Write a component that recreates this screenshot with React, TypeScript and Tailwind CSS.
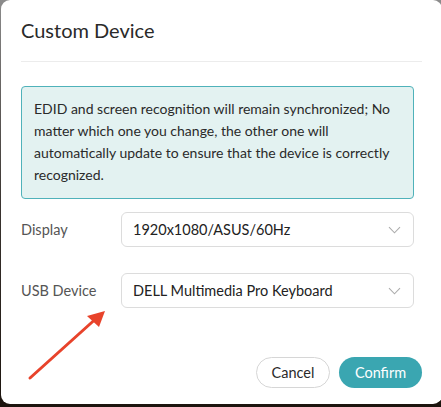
import React from "react";

function Chevron() {
  return (
    <svg width="13" height="8" viewBox="0 0 13 8" fill="none">
      <path d="M1 1.2L6.5 6.8L12 1.2" stroke="#acacac" strokeWidth="1.1" />
    </svg>
  );
}

function Select({ value }: { value: string }) {
  return (
    <div className="flex h-[35px] flex-1 items-center justify-between rounded-[6px] border border-[#dcdcdc] bg-white pl-[11px] pr-[12px]">
      <span className="text-[14.5px] text-[#222]">{value}</span>
      <Chevron />
    </div>
  );
}

export default function App() {
  return (
    <div
      className="relative h-[407px] w-[441px] overflow-hidden bg-gradient-to-b from-[#8c8c8c] via-[#3a3430] to-[#1c140e]"
      style={{ fontFamily: 'Lato, "Noto Sans", sans-serif' }}
    >
      <div className="ml-[1px] flex h-[404px] w-[441px] flex-col rounded-[9px] bg-white px-5">
        <div className="pt-[16px] pb-[17px] text-[20px] leading-[28px] text-[#2a2a2a]">Custom Device</div>
        <div className="h-px bg-[#ececec]" />
        <div className="flex flex-col pr-2">
          <div className="mt-[24px] rounded-[4px] border border-[#4fb2ba] bg-[#e3f2f1] pl-[12px] pr-[10px] pt-[11px] pb-[12px] text-[14px] leading-[22px] text-[#2a2a2a]">
            EDID and screen recognition will remain synchronized; No matter which one you change, the other one will
            automatically update to ensure that the device is correctly recognized.
          </div>
          <div className="mt-[13px] flex items-center">
            <div className="w-[100px] text-[14.5px] text-[#555]">Display</div>
            <Select value="1920x1080/ASUS/60Hz" />
          </div>
          <div className="mt-[26px] flex items-center">
            <div className="w-[100px] text-[14.5px] text-[#555]">USB Device</div>
            <Select value="DELL Multimedia Pro Keyboard" />
          </div>
        </div>
        <div className="mt-[49px] flex justify-end gap-[9px]">
          <button className="h-[31px] w-[74px] rounded-full border border-[#d6d6d6] bg-white text-[14.5px] text-[#2a2a2a]">
            Cancel
          </button>
          <button className="h-[31px] w-[83px] rounded-full bg-[#3aa6b1] text-[14.5px] text-white">Confirm</button>
        </div>
      </div>
      <svg className="pointer-events-none absolute left-0 top-0" width="441" height="407">
        <line x1="30" y1="378" x2="100" y2="315" stroke="#e8432b" strokeWidth="3" strokeLinecap="round" />
        <polygon points="105,311 87,316 99,327" fill="#e8432b" />
      </svg>
    </div>
  );
}
